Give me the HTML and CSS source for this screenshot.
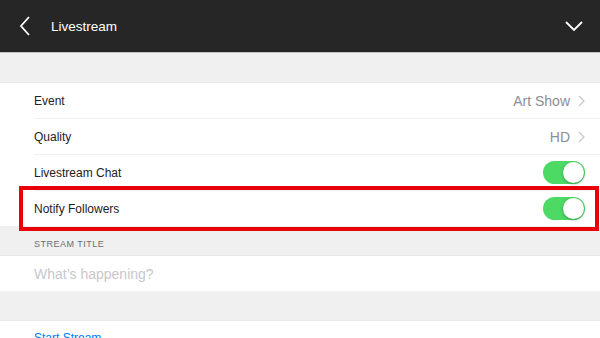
FILE: index.html
```html
<!DOCTYPE html>
<html lang="en">
<head>
    <meta charset="UTF-8">
    <meta name="viewport" content="width=device-width, initial-scale=1.0">
    <title>Livestream</title>
    <link rel="stylesheet" href="styles.css">
</head>
<body>

    <header class="nav-bar">
        <svg class="nav-back" width="12" height="20" viewBox="0 0 12 20">
            <path d="M10 1 L2 10 L10 19" fill="none" stroke="#fff" stroke-width="1.8"/>
        </svg>
        <h1 class="nav-title">Livestream</h1>
        <svg class="nav-menu" width="18" height="10" viewBox="0 0 18 10">
            <path d="M1 1 L9 9 L17 1" fill="none" stroke="#fff" stroke-width="1.8"/>
        </svg>
    </header>

    <div class="spacer"></div>

    <section class="group">
        <div class="row">
            <span class="row-label">Event</span>
            <span class="row-value">Art Show</span>
            <svg class="row-chevron" width="7" height="12" viewBox="0 0 7 12">
                <path d="M1 1 L6 6 L1 11" fill="none" stroke="#c7c7cc" stroke-width="1.2"/>
            </svg>
        </div>
        <div class="row">
            <span class="row-label">Quality</span>
            <span class="row-value">HD</span>
            <svg class="row-chevron" width="7" height="12" viewBox="0 0 7 12">
                <path d="M1 1 L6 6 L1 11" fill="none" stroke="#c7c7cc" stroke-width="1.2"/>
            </svg>
        </div>
        <div class="row">
            <span class="row-label">Livestream Chat</span>
            <span class="toggle on"><span class="knob"></span></span>
        </div>
        <div class="row highlighted">
            <span class="row-label">Notify Followers</span>
            <span class="toggle on"><span class="knob"></span></span>
        </div>
    </section>

    <div class="section-header">Stream Title</div>

    <section class="group">
        <div class="row input-row">
            <span class="placeholder">What’s happening?</span>
        </div>
    </section>

    <div class="spacer"></div>

    <section class="group">
        <div class="row action-row">
            <span class="row-action">Start Stream</span>
        </div>
    </section>

</body>
</html>
```

FILE: styles.css
```css
body {
    margin: 0;
    font-family: "Liberation Sans", Arial, sans-serif;
    background-color: #f0f0f0;
    color: #222;
    overflow: hidden;
}

.nav-bar {
    height: 52px;
    background-color: #262626;
    border-bottom: 1px solid #c4c4c4;
    display: flex;
    align-items: center;
    padding: 0 17px 0 19px;
}

.nav-back {
    margin-right: 20px;
}

.nav-title {
    flex-grow: 1;
    margin: 0;
    color: #fff;
    font-size: 13.5px;
    font-weight: normal;
}

.spacer {
    height: 29px;
}

.group {
    background-color: #fff;
    border-top: 1px solid #e8e8e8;
}

.row {
    position: relative;
    height: 35px;
    margin-left: 34px;
    padding-right: 15px;
    display: flex;
    align-items: center;
    border-bottom: 1px solid #f0f0f0;
    font-size: 12px;
}

.row:last-child {
    border-bottom: none;
}

.row-label {
    flex-grow: 1;
}

.row-value {
    color: #8e8e93;
    font-size: 14px;
    margin-right: 8px;
}

/* switch */
.toggle {
    width: 42px;
    height: 23px;
    border-radius: 12px;
    background-color: #4cd964;
    display: flex;
    align-items: center;
    justify-content: flex-end;
    padding: 0 1px;
    box-sizing: border-box;
}

.knob {
    width: 21px;
    height: 21px;
    border-radius: 50%;
    background-color: #fff;
    box-shadow: 0 1px 3px rgba(0, 0, 0, 0.3);
}

/* red annotation frame */
.highlighted::after {
    content: "";
    position: absolute;
    left: -15px;
    right: 1px;
    top: -5px;
    bottom: -5px;
    border: 4px solid #e8000b;
}

.section-header {
    height: 29px;
    line-height: 36px;
    padding-left: 34px;
    font-size: 9px;
    letter-spacing: 0.5px;
    color: #6d6d72;
    text-transform: uppercase;
}

.input-row {
    font-size: 14px;
}

.placeholder {
    color: #c7c7cd;
}

.action-row {
    align-items: flex-start;
    padding-top: 10px;
    box-sizing: border-box;
}

.row-action {
    color: #007aff;
    font-size: 12px;
}
```
